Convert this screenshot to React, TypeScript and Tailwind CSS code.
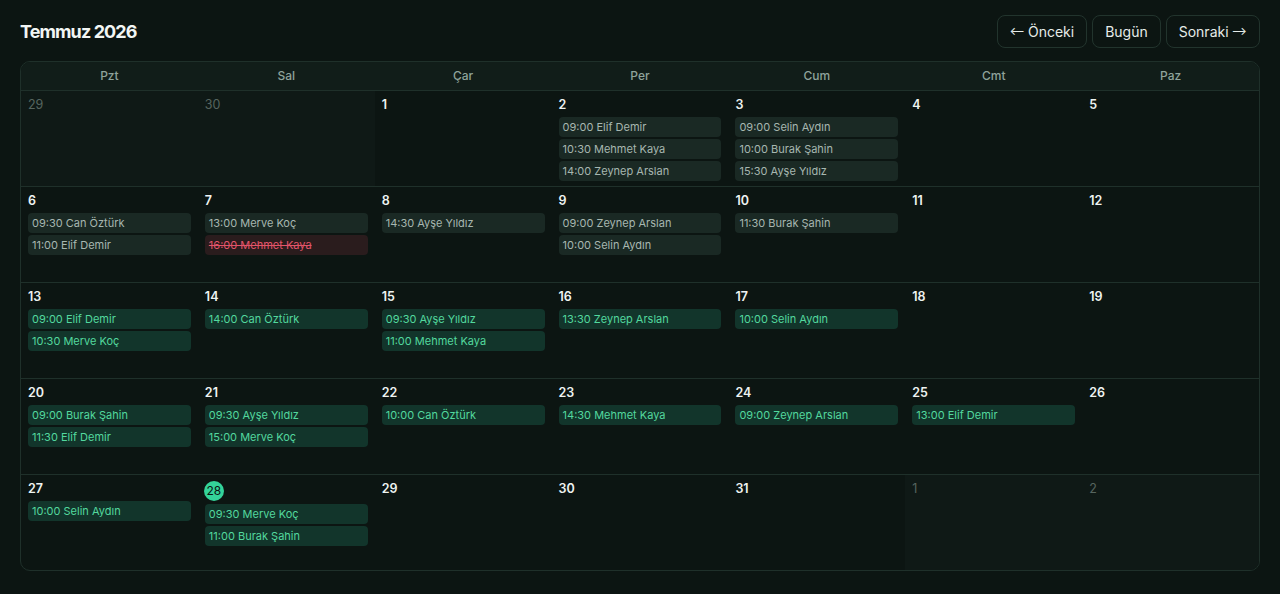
import React from "react";

type Ev = { t: string; kind: "past" | "future" | "cancel" };
type Day = { n: number; out?: boolean; today?: boolean; ev?: Ev[] };

const p = (t: string): Ev => ({ t, kind: "past" });
const f = (t: string): Ev => ({ t, kind: "future" });
const c = (t: string): Ev => ({ t, kind: "cancel" });

const weeks: Day[][] = [
  [
    { n: 29, out: true },
    { n: 30, out: true },
    { n: 1 },
    { n: 2, ev: [p("09:00 Elif Demir"), p("10:30 Mehmet Kaya"), p("14:00 Zeynep Arslan")] },
    { n: 3, ev: [p("09:00 Selin Aydın"), p("10:00 Burak Şahin"), p("15:30 Ayşe Yıldız")] },
    { n: 4 },
    { n: 5 },
  ],
  [
    { n: 6, ev: [p("09:30 Can Öztürk"), p("11:00 Elif Demir")] },
    { n: 7, ev: [p("13:00 Merve Koç"), c("16:00 Mehmet Kaya")] },
    { n: 8, ev: [p("14:30 Ayşe Yıldız")] },
    { n: 9, ev: [p("09:00 Zeynep Arslan"), p("10:00 Selin Aydın")] },
    { n: 10, ev: [p("11:30 Burak Şahin")] },
    { n: 11 },
    { n: 12 },
  ],
  [
    { n: 13, ev: [f("09:00 Elif Demir"), f("10:30 Merve Koç")] },
    { n: 14, ev: [f("14:00 Can Öztürk")] },
    { n: 15, ev: [f("09:30 Ayşe Yıldız"), f("11:00 Mehmet Kaya")] },
    { n: 16, ev: [f("13:30 Zeynep Arslan")] },
    { n: 17, ev: [f("10:00 Selin Aydın")] },
    { n: 18 },
    { n: 19 },
  ],
  [
    { n: 20, ev: [f("09:00 Burak Şahin"), f("11:30 Elif Demir")] },
    { n: 21, ev: [f("09:30 Ayşe Yıldız"), f("15:00 Merve Koç")] },
    { n: 22, ev: [f("10:00 Can Öztürk")] },
    { n: 23, ev: [f("14:30 Mehmet Kaya")] },
    { n: 24, ev: [f("09:00 Zeynep Arslan")] },
    { n: 25, ev: [f("13:00 Elif Demir")] },
    { n: 26 },
  ],
  [
    { n: 27, ev: [f("10:00 Selin Aydın")] },
    { n: 28, today: true, ev: [f("09:30 Merve Koç"), f("11:00 Burak Şahin")] },
    { n: 29 },
    { n: 30 },
    { n: 31 },
    { n: 1, out: true },
    { n: 2, out: true },
  ],
];

const heads = ["Pzt", "Sal", "Çar", "Per", "Cum", "Cmt", "Paz"];

function Chip({ ev }: { ev: Ev }) {
  if (ev.kind === "cancel")
    return (
      <div className="h-5 rounded-[4px] bg-[#2a1c1d] px-1 text-[11px] leading-5 text-[#e2546a] line-through truncate">
        {ev.t}
      </div>
    );
  if (ev.kind === "future")
    return (
      <div className="h-5 rounded-[4px] bg-[#12352b] px-1 text-[11px] leading-5 text-[#52d89e] truncate">
        {ev.t}
      </div>
    );
  return (
    <div className="h-5 rounded-[4px] bg-[#1a2924] px-1 text-[11px] leading-5 text-[#a7b7b0] truncate">
      {ev.t}
    </div>
  );
}

function Cell({ d }: { d: Day }) {
  return (
    <div className={`flex flex-col px-[7px] pt-[6px] ${d.out ? "bg-[#0f1916]" : ""}`}>
      {d.today ? (
        <div className="mb-[3px] -ml-[1px] flex h-5 w-5 items-center justify-center rounded-full bg-[#34d399] text-[12px] text-[#0b1411]">
          {d.n}
        </div>
      ) : d.out ? (
        <div className="mb-1 h-4 text-[12.5px] leading-4 font-normal text-[#56655f]">{d.n}</div>
      ) : (
        <div className="mb-1 h-4 text-[12.5px] leading-4 font-semibold text-[#eef3f1]">{d.n}</div>
      )}
      <div className="flex flex-col gap-[2px]">
        {(d.ev || []).map((e, i) => (
          <Chip key={i} ev={e} />
        ))}
      </div>
    </div>
  );
}

export default function App() {
  return (
    <div
      className="min-h-[594px] w-full bg-[#0c1512] px-5 pt-[15px] pb-5 text-[#e5ebe8]"
      style={{ fontFamily: "Inter, 'Noto Sans', sans-serif" }}
    >
      <div className="mb-[13px] flex h-[33px] items-center justify-between">
        <h1 className="text-[18px] font-bold tracking-[-0.05em] text-[#f2f6f4]">Temmuz 2026</h1>
        <div className="flex gap-[5px]">
          <button className="flex h-[33px] items-center gap-[3px] rounded-lg border border-[#22342d] px-3 text-[14px] text-[#e6ece9]">
            <span className="text-[11.5px]">⟵</span>
            <span>Önceki</span>
          </button>
          <button className="h-[33px] rounded-lg border border-[#22342d] px-3 text-[14px] text-[#e6ece9]">
            Bugün
          </button>
          <button className="flex h-[33px] items-center gap-[3px] rounded-lg border border-[#22342d] px-3 text-[14px] text-[#e6ece9]">
            <span>Sonraki</span>
            <span className="text-[11.5px]">⟶</span>
          </button>
        </div>
      </div>
      <div className="overflow-hidden rounded-[10px] border border-[#1f302a]">
        <div className="grid h-[28px] grid-cols-7 bg-[#111d19]">
          {heads.map((h) => (
            <div key={h} className="flex items-center justify-center text-[12px] font-medium text-[#8fa39b]">
              {h}
            </div>
          ))}
        </div>
        {weeks.map((w, i) => (
          <div key={i} className="grid h-[96px] grid-cols-7 border-t border-[#1f302a]">
            {w.map((d, j) => (
              <Cell key={j} d={d} />
            ))}
          </div>
        ))}
      </div>
    </div>
  );
}
